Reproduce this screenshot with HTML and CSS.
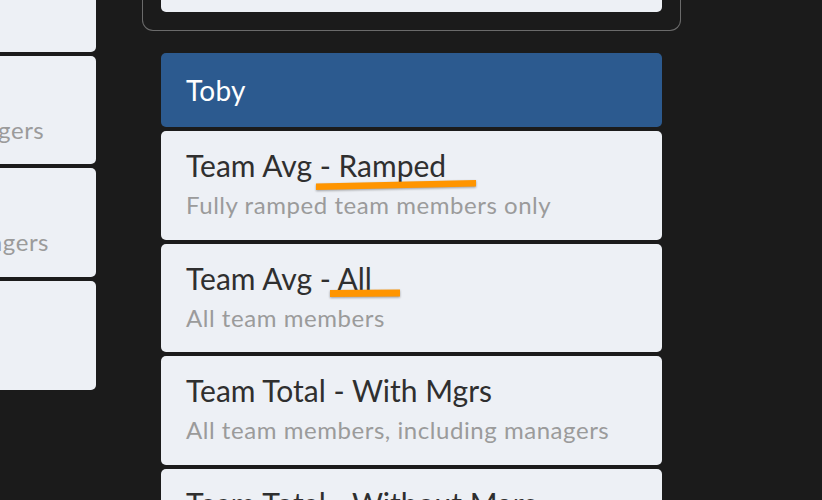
FILE: index.html
```html
<!DOCTYPE html>
<html>
<head>
<meta charset="utf-8">
<link rel="stylesheet" href="styles.css">
</head>
<body>
<div class="stage">
  <div class="col col-left">
    <div class="card"><div class="title">Team Avg - All</div><div class="sub">All team members</div></div>
    <div class="card"><div class="title">Team Total - With Mgrs</div><div class="sub">All team members, including managers</div></div>
    <div class="card"><div class="title">Team Total - Without Mgrs</div><div class="sub">All team members, excluding managers</div></div>
    <div class="card"><div class="title">Managers</div><div class="sub">Managers only</div></div>
  </div>
  <div class="col col-right">
    <div class="group">
      <div class="card card-short"></div>
    </div>
    <div class="list">
      <div class="header">Toby</div>
      <div class="card">
        <div class="title">Team Avg - Ramped</div>
        <div class="sub">Fully ramped team members only</div>
        <svg class="mark mark-1" width="170" height="16" viewBox="0 0 170 16"><polygon points="1,5.5 161,2 161,8.5 1,12" fill="#ff9500"/></svg>
      </div>
      <div class="card">
        <div class="title">Team Avg - All</div>
        <div class="sub">All team members</div>
        <svg class="mark mark-2" width="80" height="16" viewBox="0 0 80 16"><polygon points="1,2 71,1.5 71,8.5 1,9" fill="#ff9500"/></svg>
      </div>
      <div class="card">
        <div class="title">Team Total - With Mgrs</div>
        <div class="sub">All team members, including managers</div>
      </div>
      <div class="card">
        <div class="title">Team Total - Without Mgrs</div>
        <div class="sub">All team members, excluding managers</div>
      </div>
    </div>
  </div>
</div>
</body>
</html>
```
FILE: styles.css
```css
html, body {
  margin: 0;
  padding: 0;
  background: #1b1b1b;
  overflow: hidden;
  height: 500px;
}
body {
  font-family: "Lato", "Open Sans", sans-serif;
}
.stage {
  display: flex;
  align-items: flex-start;
  gap: 46px;
}
.col {
  display: flex;
  flex-direction: column;
  flex: none;
}
.col-left {
  width: 500px;
  margin-left: -404px;
  margin-top: -57px;
  gap: 4px;
}
.col-right {
  width: 539px;
  margin-top: -70px;
}
.group {
  border: 1.5px solid #6b6b6b;
  border-top: none;
  border-radius: 0 0 11px 11px;
  padding: 0 18px 18px;
}
.card {
  position: relative;
  box-sizing: border-box;
  height: 108.67px;
  background: #edf0f5;
  border-radius: 5px;
  padding: 16px 25px 0;
}
.card-short {
  height: 82px;
}
.list {
  display: flex;
  flex-direction: column;
  gap: 4px;
  margin: 22px 19px 0;
}
.header {
  box-sizing: border-box;
  height: 74px;
  background: #2c5a8f;
  border-radius: 5px;
  color: #fff;
  font-size: 28px;
  letter-spacing: 0.2px;
  padding: 0 25px;
  display: flex;
  align-items: center;
}
.title {
  font-size: 30px;
  line-height: 36px;
  color: #2f2f2f;
  white-space: nowrap;
}
.sub {
  font-size: 24px;
  line-height: 30px;
  letter-spacing: 0.55px;
  margin-top: 7px;
  color: #9b9b9b;
  white-space: nowrap;
}
.mark {
  position: absolute;
  filter: drop-shadow(0 1.5px 1px rgba(0,0,0,0.35));
}
.mark-1 {
  left: 154px;
  top: 47px;
}
.mark-2 {
  left: 168px;
  top: 44px;
}
```
